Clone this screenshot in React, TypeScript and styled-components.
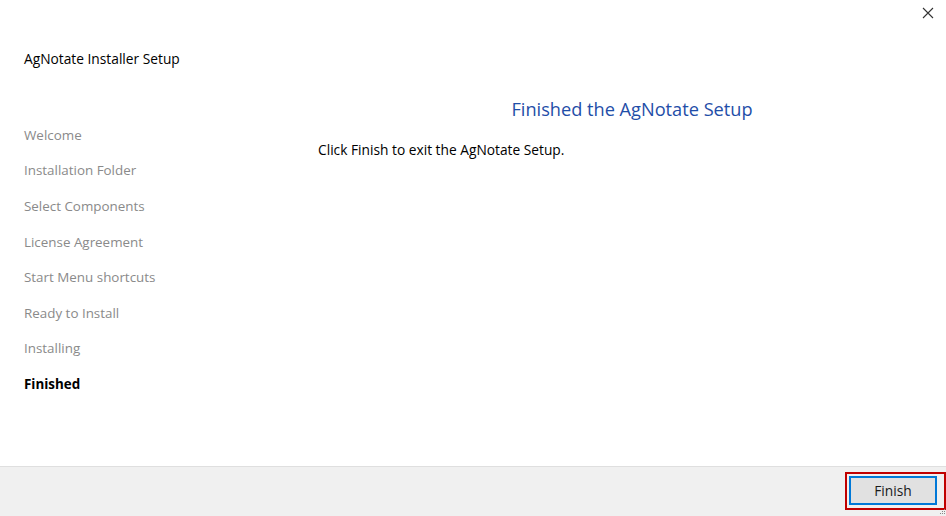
import React from "react";
import styled, { createGlobalStyle } from "styled-components";

const Global = createGlobalStyle`
  html, body { margin: 0; padding: 0; background: #ffffff; }
  body { font-family: "Open Sans", "Noto Sans", sans-serif; }
`;

const Window = styled.div`
  width: 946px;
  height: 516px;
  display: flex;
  flex-direction: column;
  background: #ffffff;
  position: relative;
  overflow: hidden;
`;

const Main = styled.div`
  flex: 1;
  display: flex;
  flex-direction: column;
`;

const CloseButton = styled.button`
  position: absolute;
  top: 3px;
  right: 6px;
  width: 24px;
  height: 20px;
  border: none;
  background: transparent;
  padding: 0;
  display: flex;
  align-items: center;
  justify-content: center;
`;

const Header = styled.div`
  padding: 48px 24px 0 24px;
  height: 22px;
  line-height: 22px;
  font-size: 13.75px;
  color: #000000;
`;

const Body = styled.div`
  display: flex;
  margin-top: 21px;
`;

const Sidebar = styled.div`
  width: 294px;
  padding: 26px 0 0 24px;
  display: grid;
  grid-auto-rows: 35.6px;
  align-items: center;
`;

const Step = styled.div<{ $active?: boolean }>`
  font-size: 13.4px;
  color: ${(p) => (p.$active ? "#000000" : "#8a8a8a")};
  font-weight: ${(p) => (p.$active ? 700 : 400)};
`;

const Content = styled.div`
  flex: 1;
  display: flex;
  flex-direction: column;
`;

const Title = styled.div`
  text-align: center;
  font-size: 18.2px;
  line-height: 36px;
  color: #1f4ea8;
`;

const Message = styled.div`
  margin-top: 13px;
  font-size: 13.75px;
  line-height: 20px;
  color: #000000;
`;

const Footer = styled.div`
  height: 50px;
  border-top: 1px solid #dfdfdf;
  background: #f0f0f0;
  display: flex;
  justify-content: flex-end;
  align-items: flex-start;
  padding-top: 5px;
  box-sizing: border-box;
  position: relative;
`;

const Highlight = styled.div`
  border: 2px solid #c00000;
  padding: 2px 7px 3px 2px;
  display: flex;
`;

const PrimaryButton = styled.button`
  width: 88px;
  height: 29px;
  box-sizing: border-box;
  border: 2px solid #0078d7;
  background: #e1e1e1;
  font-family: "Open Sans", "Noto Sans", sans-serif;
  font-size: 13.75px;
  color: #1a1a1a;
  padding: 0;
`;

const Grip = styled.svg`
  position: absolute;
  right: 0;
  bottom: 0;
`;

const steps = [
  "Welcome",
  "Installation Folder",
  "Select Components",
  "License Agreement",
  "Start Menu shortcuts",
  "Ready to Install",
  "Installing",
  "Finished",
];

export default function App() {
  return (
    <>
      <Global />
      <Window>
        <Main>
          <CloseButton aria-label="Close">
            <svg width="12" height="12" viewBox="0 0 12 12">
              <path d="M1 1 L11 11 M11 1 L1 11" stroke="#333" strokeWidth="1.1" fill="none" />
            </svg>
          </CloseButton>
          <Header>AgNotate Installer Setup</Header>
          <Body>
            <Sidebar>
              {steps.map((s, i) => (
                <Step key={s} $active={i === steps.length - 1}>
                  {s}
                </Step>
              ))}
            </Sidebar>
            <Content>
              <Title>Finished the AgNotate Setup</Title>
              <Message>Click Finish to exit the AgNotate Setup.</Message>
            </Content>
          </Body>
        </Main>
        <Footer>
          <Highlight>
            <PrimaryButton>Finish</PrimaryButton>
          </Highlight>
          <Grip width="6" height="7" viewBox="0 0 6 7">
            <rect x="4" y="0" width="1" height="1" fill="#888" />
            <rect x="2" y="2" width="1" height="1" fill="#888" />
            <rect x="4" y="2" width="1" height="1" fill="#888" />
            <rect x="0" y="4" width="1" height="1" fill="#888" />
            <rect x="2" y="4" width="1" height="1" fill="#888" />
            <rect x="4" y="4" width="1" height="1" fill="#888" />
          </Grip>
        </Footer>
      </Window>
    </>
  );
}
